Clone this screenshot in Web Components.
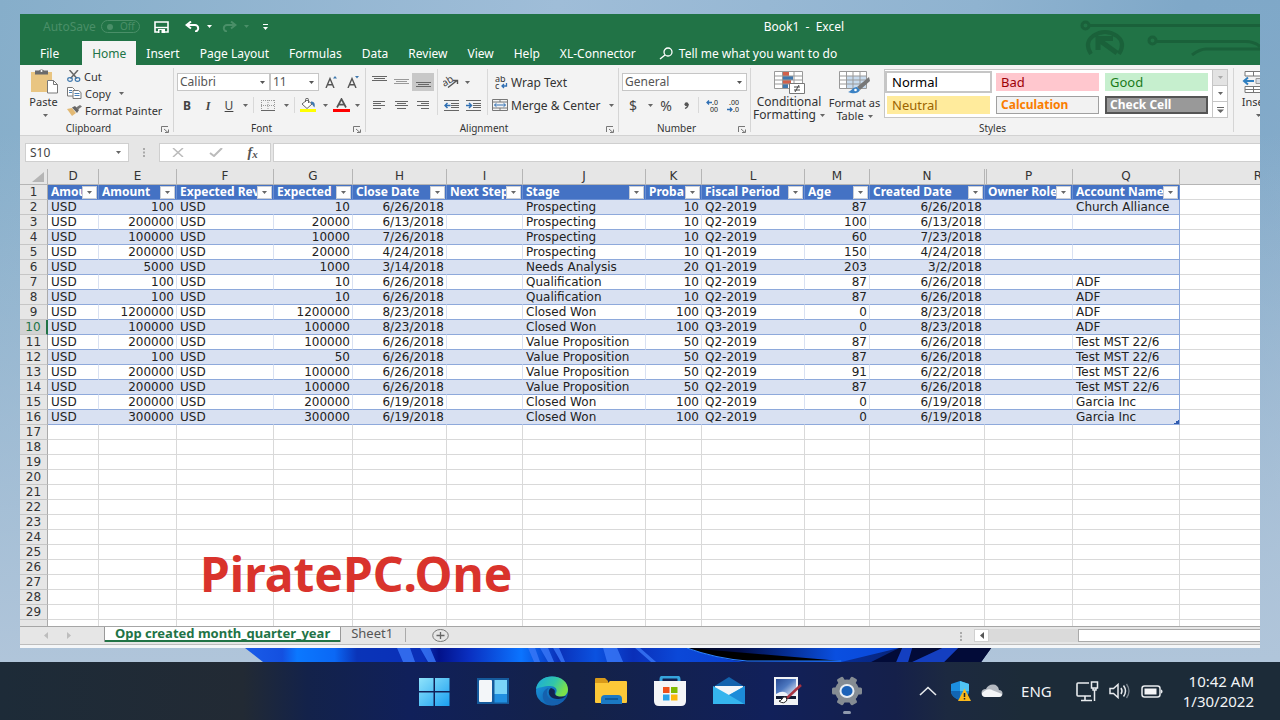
<!DOCTYPE html>
<html lang="en">
<head>
<meta charset="utf-8">
<title>Book1 - Excel</title>
<style>
    body {
        margin: 0;
        height: 100vh;
        overflow: hidden;
        display: flex;
        flex-direction: column;
        font-family: "Noto Sans", "Open Sans", sans-serif;
        font-size: 12px;
        color: #333;
    }
</style>
</head>
<body>
<desk-top>
    <excel-window>
        <title-bar></title-bar>
        <ribbon-tabs active="Home" tabs="File,Home,Insert,Page Layout,Formulas,Data,Review,View,Help,XL-Connector"></ribbon-tabs>
        <ribbon-bar></ribbon-bar>
        <formula-bar></formula-bar>
        <sheet-grid></sheet-grid>
        <sheet-tabs></sheet-tabs>
    </excel-window>
    <span slot="mark">PiratePC.One</span>
</desk-top>
<task-bar></task-bar>

<script>
const svg = (w, h, body) =>
    `<svg width="${w}" height="${h}" viewBox="0 0 ${w} ${h}" fill="none" aria-hidden="true">${body}</svg>`;

const lines = (rows, color = '#666') =>
    rows.map(([x, y, w]) => `<path d="M${x} ${y}.5h${w}" stroke="${color}"/>`).join('');

const ICONS = {
    caret: svg(5, 3, '<path d="M0 0h5L2.5 3z" fill="currentColor"/>'),
    more: svg(7, 6, '<path d="M0 .5h7" stroke="currentColor"/><path d="M0 2.500h7L3.500 6z" fill="currentColor"/>'),
    save: svg(15, 12, '<path d="M1 1h13v10H1z" stroke="#fff" stroke-width="1.6"/><path d="M1 6.5h13" stroke="#fff" stroke-width="1.4"/><path d="M4 8h7v4H4z" fill="#fff"/><path d="M5.500 9h2v3h-2z" fill="#217346"/>'),
    undo: svg(16, 11, '<path d="M2 4h8a3.200 3.200 0 0 1 0 6.400" stroke="currentColor" stroke-width="2"/><path d="M6 .5L1.500 4 6 7.500" stroke="currentColor" stroke-width="2"/>'),
    redo: svg(16, 11, '<path d="M14 4H6a3.200 3.200 0 0 0 0 6.400" stroke="currentColor" stroke-width="2"/><path d="M10 .5L14.500 4 10 7.500" stroke="currentColor" stroke-width="2"/>'),
    customize: svg(5, 6, '<path d="M0 .5h5" stroke="#fff"/><path d="M0 3h5L2.500 6z" fill="#fff"/>'),
    search: svg(15, 13, '<circle cx="9" cy="5" r="4" stroke="#fff" stroke-width="1.300"/><path d="M6 8l-5 4" stroke="#fff" stroke-width="1.500"/>'),
    paste: svg(28, 25, '<path d="M1 3h21v20H1z" fill="#e9c582"/><path d="M5 1.500h4a3 2 0 0 1 5 0h4v4H5z" fill="#6b6b6b"/><circle cx="11.500" cy="2" r="1" fill="#fff"/><path d="M17 11h7l4 4v9.500H17z" fill="#fff"/><path d="M17.500 11.500h6l4 4v8.500h-10z" stroke="#777"/><path d="M23.500 11.500v4h4" stroke="#777"/>'),
    cut: svg(14, 12, '<path d="M2.500 0L10 8.500M11 0L3.500 8.500" stroke="#666" stroke-width="1.500"/><ellipse cx="3" cy="9.500" rx="2.300" ry="1.800" stroke="#3f78ae" stroke-width="1.200"/><ellipse cx="10.500" cy="9.500" rx="2.300" ry="1.800" stroke="#3f78ae" stroke-width="1.200"/>'),
    copy: svg(15, 12, '<path d="M.5.5h5l2 2v6.500h-7z" fill="#fff" stroke="#777"/><path d="M2 3.500h3M2 5.500h3" stroke="#4a80b5"/><path d="M6 3.500h5.500l2.500 2v6H6z" fill="#fff" stroke="#777"/><path d="M7.500 6.500h5M7.500 8.500h5" stroke="#4a80b5"/>'),
    painter: svg(15, 11, '<path d="M0 4l5-1 4 5-4 3z" fill="#e2b974"/><path d="M5 2.500l3-1.500 4 4-2 3z" fill="#666"/><path d="M9 2.500l4-2.500 2 1.500-4 3z" fill="#777"/>'),
    grow: svg(13, 12, '<path d="M1 12L5 2.500 9 12M2.600 8.700h4.800" stroke="#555" stroke-width="1.400"/><path d="M8 2.500h4L10 0z" fill="#3f78ae"/>'),
    shrink: svg(13, 12, '<path d="M1 12L5 2.500 9 12M2.600 8.700h4.800" stroke="#555" stroke-width="1.400"/><path d="M8 0h4L10 2.500z" fill="#3f78ae"/>'),
    borders: svg(14, 11, '<path d="M.5 0v11M7 0v11M13.500 0v11M0 .5h14M0 5.500h14" stroke="#999" stroke-dasharray="1 1"/><path d="M0 10.500h14" stroke="#666"/>'),
    fill: svg(18, 14, '<path d="M3 6l5-4 5 4-5 4.500z" fill="#fff" stroke="#666"/><path d="M6.500 4V1.500a1.500 1.200 0 0 1 3 0V5" stroke="#666"/><path d="M12 3.500c3 0 4.500 2 3.500 6-1.500-1-1.500-3-3.500-4z" fill="#3f78ae"/><path d="M1 11h16v3H1z" fill="#ff0"/>'),
    color: svg(17, 14, '<path d="M4 9.500L8.500 1 13 9.500M5.500 6.700h6" stroke="#555" stroke-width="1.700"/><path d="M0 11h17v3H0z" fill="#f00"/>'),
    top: svg(15, 12, lines([[0, 0, 15], [2, 2, 11], [0, 4, 15]])),
    middle: svg(15, 12, lines([[0, 3, 15], [2, 5, 11], [0, 7, 15]], '#999')),
    bottom: svg(15, 12, lines([[0, 6, 15], [2, 8, 11], [0, 10, 15]])),
    left: svg(12, 10, lines([[0, 1, 12], [0, 3, 8], [0, 5, 12], [0, 8, 8]])),
    center: svg(13, 10, lines([[0, 1, 13], [2, 3, 9], [0, 5, 13], [2, 8, 9]])),
    right: svg(12, 10, lines([[0, 1, 12], [4, 3, 8], [0, 5, 12], [4, 8, 8]])),
    orient: svg(17, 12, '<text x="0" y="9" font-size="10" fill="#444" transform="rotate(-32 4 8)">ab</text><path d="M5 11.500l9-7M10 4.500h4.500v3.500" stroke="#555" stroke-width="1.400"/>'),
    outdent: svg(15, 11, lines([[0, 0, 15], [7, 3, 8], [7, 5, 8], [7, 7, 8], [0, 10, 15]]) + '<path d="M1 5.500h5.500M3.500 3L1 5.500 3.500 8" stroke="#2f6fb3" stroke-width="1.500"/>'),
    indent: svg(15, 11, lines([[0, 0, 15], [7, 3, 8], [7, 5, 8], [7, 7, 8], [0, 10, 15]]) + '<path d="M0 5.500h5.500M3 3l2.500 2.500L3 8" stroke="#2f6fb3" stroke-width="1.500"/>'),
    wrap: svg(14, 13, '<text x="1" y="6" font-size="9" fill="#333">ab</text><text x="1" y="13" font-size="9" fill="#333">c</text><path d="M12.500 7v3H8M10 8l-2 2 2 2" stroke="#2f6fb3" stroke-width="1.300"/>'),
    merge: svg(16, 12, '<path d="M.5.500h15v11H.5zM.5 3h15M.5 9h15M8 0v3M8 9v3" stroke="#777"/><path d="M2.500 6h11M4.500 4.200L2.500 6l2 1.800M11.500 4.200l2 1.800-2 1.800" stroke="#2f6fb3"/>'),
    comma: svg(5, 7, '<circle cx="2.500" cy="2.300" r="2" fill="#555"/><path d="M4 2q.5 3-3 4.500" stroke="#555" stroke-width="1.200"/>'),
    incDec: svg(13, 13, '<text x="6" y="6" font-size="7" fill="#222">.0</text><text x="4" y="13" font-size="7" fill="#222">00</text><path d="M1 3.500h5M3 1.500l-2 2 2 2" stroke="#2f6fb3" stroke-width="1.300"/>'),
    decDec: svg(13, 13, '<text x="2" y="6" font-size="7" fill="#222">.00</text><text x="6" y="13" font-size="7" fill="#222">.0</text><path d="M0 10.500h5M3 8.500l2 2-2 2" stroke="#2f6fb3" stroke-width="1.300"/>'),
    condFormat: svg(31, 23, '<path d="M.5.500h28v17H.5z" fill="#fff"/><path d="M9 1h6v4H9zM9 9h8v4H9z" fill="#d2604a"/><path d="M9 5h10v4H9zM9 13h5v4H9z" fill="#3f78ae"/><path d="M.5.500h28v17H.5zM.5 5h28M.5 9h28M.5 13h28M8.500 0v18M20 0v18" stroke="#999"/><path d="M15.500 12.500h15v10h-15z" fill="#fff" stroke="#777"/><path d="M20 16h6M20 19h6M25 14l-4 7" stroke="#444"/>'),
    formatTable: svg(31, 24, '<path d="M.5.500h27v17H.5z" fill="#fff"/><path d="M8 5h19v12H8z" fill="#c8dbee"/><path d="M.5.500h27v17H.5zM.5 5h27M.5 9h27M.5 13h27M7.500 0v18M14 0v18M21 0v18" stroke="#999"/><path d="M30 6l1 4-10 9-3-3z" fill="#777"/><path d="M9 21c4-1 4-5 9-5l3 3c-2 4-7 4-12 2z" fill="#3b82c4"/><circle cx="16.500" cy="19" r="1.300" fill="#fff"/>'),
    insertCells: svg(30, 23, '<path d="M3 .5h26v4.500H3zM3 15.500h26v6H3zM11.500 0v5M20 0v5M11.500 15.500v6M20 15.500v6M3 18.500h26" fill="#fff" stroke="#777"/><path d="M14 7.500h14v5H14z" fill="#d7dde5" stroke="#999"/><path d="M2 10h10M6 6.500L2 10l4 3.500" stroke="#2f7fc0" stroke-width="2"/>'),
    launcher: svg(8, 7, '<path d="M.5 6V.5H7" stroke="#777"/><path d="M3 3l4 3.500M7.500 3.500v3H4" stroke="#777"/>'),
    cancel: svg(12, 9, '<path d="M1 0l10 9M11 0L1 9" stroke="#bbb" stroke-width="1.500"/>'),
    accept: svg(14, 9, '<path d="M1 5l4 3L13 0" stroke="#bbb" stroke-width="2"/>'),
    dots: svg(3, 9, '<path d="M0 0h2v2H0zM0 3.500h2v2H0zM0 7h2v2H0z" fill="#aaa"/>'),
    prev: svg(4, 7, '<path d="M4 0v7L0 3.500z" fill="currentColor"/>'),
    next: svg(4, 7, '<path d="M0 0v7l4-3.500z" fill="currentColor"/>'),
    plus: svg(17, 13, '<ellipse cx="8.500" cy="6.500" rx="7.800" ry="6" stroke="#777"/><path d="M4.500 6.500h8M8.500 3v7" stroke="#666" stroke-width="1.300"/>'),
    start: svg(32, 30, '<defs><linearGradient id="s" x1="0" y1="0" x2="1" y2="1"><stop stop-color="#8fe3fb"/><stop offset="1" stop-color="#1a9ff0"/></linearGradient></defs><path d="M1 2h14.500v13H1zM17 2h14.500v13H17zM1 16.500h14.500V30H1zM17 16.500h14.500V30H17z" fill="url(#s)"/>'),
    widgets: svg(32, 28, '<path d="M0 1h32v26H0z" fill="#155a9c"/><rect x="2" y="3" width="13" height="22" rx="1" fill="#f3f6f9"/><rect x="17.500" y="3" width="12.500" height="14" fill="#7ad4f8"/><rect x="17.500" y="17" width="12.500" height="8.500" fill="#218fe0"/>'),
    edge: svg(34, 30, '<defs><linearGradient id="e" x1="0" y1="0" x2="1" y2=".4"><stop stop-color="#1ba8dd"/><stop offset=".6" stop-color="#32c6a9"/><stop offset="1" stop-color="#7be04a"/></linearGradient><linearGradient id="f" x1="0" y1="0" x2="1" y2="1"><stop stop-color="#1b9de2"/><stop offset="1" stop-color="#0c4ea0"/></linearGradient></defs><ellipse cx="17" cy="15" rx="16" ry="14.500" fill="url(#f)"/><path d="M1 13C2 5 9 .5 17 .5c10 0 16 6 16 13 0 5-4 7.500-8 7.500-5 0-5.500-2-4-4 2-4-1-7-6-7-6 0-12 2-14 3z" fill="url(#e)"/><path d="M14 12c-3 2-4 12 8 13 4 0 7-2 8-3-3 6-9 8-15 7C5 26 6 13 14 12z" fill="#1561ae"/><path d="M16 12c-4 2-3 11 6 11 5 0 7-1 9-3-4 1-10 1-11-2-1-2 2-4-4-6z" fill="#112250"/>'),
    explorer: svg(34, 28, '<path d="M1 2q0-1 1-1h9l3 3v6H1z" fill="#d89a1a"/><path d="M1 6h13l2-2h16q1 0 1 1v20q0 1-1 1H2q-1 0-1-1z" fill="#fcc838"/><path d="M7 27v-5q0-4 4-4h13q4 0 4 4v5z" fill="#1b79c4"/><path d="M11 22h13" stroke="#0c5a9c" stroke-width="2"/>'),
    store: svg(34, 30, '<path d="M8 7V3q0-2 2-2h14q2 0 2 2v4" stroke="#35a4dc" stroke-width="3"/><path d="M1 5h32v20q0 5-5 5H6q-5 0-5-5z" fill="#f4f5f7"/><path d="M10 11h6.500v6H10z" fill="#f1511b"/><path d="M18 11h6.500v6H18z" fill="#80bb03"/><path d="M10 18.500h6.500v6H10z" fill="#2aa3ea"/><path d="M18 18.500h6.500v6H18z" fill="#fbb80c"/>'),
    mail: svg(34, 28, '<path d="M1 10L17 0l16 10v3H1z" fill="#1262ad"/><path d="M3 9h28v10H3z" fill="#f2f5f8"/><path d="M1 9l16 9 16-9v18H1z" fill="#35b5ee"/><path d="M17 18l16 9.500V9z" fill="#1c8bd8"/>'),
    pen: svg(30, 28, '<defs><linearGradient id="p" x1="0" y1="0" x2="1" y2="1"><stop stop-color="#274a94"/><stop offset=".45" stop-color="#4d78c0"/><stop offset="1" stop-color="#fff"/></linearGradient></defs><path d="M1 0h24v28H1z" fill="#f1f3f6"/><path d="M3 2h20v17H3z" fill="url(#p)"/><path d="M3 17q8-5 12 1v2H3z" fill="#eef3fa"/><path d="M3 19h20v3H3z" fill="#101a33"/><path d="M28 8L14 21" stroke="#a83240" stroke-width="2.500"/><path d="M13 20q-3-1-4 2-1 2-3 2 5 4 8-1z" fill="#fff" stroke="#222"/>'),
    settings: svg(34, 30, `<g transform="translate(17 15)" fill="#858c93">${[0, 60, 120, 180, 240, 300].map(turn => `<rect x="-3.500" y="-15" width="7" height="10" rx="1.500" transform="rotate(${turn + 30})"/>`).join('')}<ellipse rx="12" ry="11.500"/><ellipse rx="7.500" ry="7" fill="#e9eef4"/><ellipse rx="5.500" ry="5" fill="#1c62b8"/></g>`),
    chevron: svg(18, 10, '<path d="M1 9l8-7.500L17 9" stroke="#e8ebee" stroke-width="1.600"/>'),
    shield: svg(21, 20, '<path d="M1 3l9-3 9 3v7c0 5-5 8-9 9-4-1-9-4-9-9z" fill="#1c8fe0"/><path d="M10 0l9 3v7h-9z" fill="#50c5f5"/><path d="M1 10h9v9c-4-1-9-4-9-9z" fill="#1265b2"/><path d="M14.500 7.500L21 20H8z" fill="#fbb91c"/><path d="M14.500 12v4M14.500 17v1.500" stroke="#222" stroke-width="1.500"/>'),
    cloud: svg(22, 14, '<path d="M5 13q-4.500 0-4.500-4T5 5q2-4.500 7-4.500T18 6q3.500 0 3.500 3.500T18 13z" fill="#b4b9c0"/><path d="M4 13q-3.500-1-3-4Q7 3 12 6.500L21 10q-.500 3-3 3z" fill="#f4f5f7"/>'),
    network: svg(23, 21, '<path d="M13 2H2q-1 0-1 1v11q0 1 1 1h13M9 15v4M5 19.500h11" stroke="#e8ebee" stroke-width="1.600"/><path d="M15.500 1h6v6h-6zM17 7v2h3V7M18.500 9v11" stroke="#e8ebee" stroke-width="1.500"/>'),
    volume: svg(22, 16, '<path d="M1 5.500h3.500L9 1.500v13l-4.500-4H1z" stroke="#e8ebee" stroke-width="1.500"/><path d="M12 5q2 3 0 6M14.500 2.500q4 5.500 0 11" stroke="#e8ebee" stroke-width="1.500"/><path d="M17.500 1q5 7 0 14" stroke="#77818b" stroke-width="1.300"/>'),
    battery: svg(22, 13, '<rect x="1" y="1" width="18" height="11" rx="2.500" stroke="#e8ebee" stroke-width="1.500"/><path d="M3.500 3.500h12v6h-12z" fill="#f4f5f7"/><path d="M20 4.500q1.500 0 1.500 2t-1.500 2z" fill="#e8ebee"/>'),
};

// Shared base: attaches the shadow root and draws the template into it
class BaseElement extends HTMLElement {

    constructor() {
        super();
        this.attachShadow({mode: 'open'});
    }

    connectedCallback() {
        this.render();
    }

    render() {
        this.shadowRoot.innerHTML = `
            <style>
                * { box-sizing: border-box; }
                svg { display: block; flex: none; }
                button, input, select { font: inherit; color: inherit; margin: 0; padding: 0; border: 0; border-radius: 0; background: none; }
            </style>
            ${this._template()}
        `;
    }
}

class DeskTop extends BaseElement {
    _template() {
        return `
            <style>
                :host {
                    flex: 1;
                    min-height: 0;
                    display: flex;
                    position: relative;
                    padding: 14px 20px;
                    box-sizing: border-box;
                    background: linear-gradient(100deg, #86aeca 0, #9fbdd8 40%, #8fb3d0 70%, #7fa8c8 85%, transparent), linear-gradient(#7fa8c8, #a3bcd4);
                }
                .shade {
                    position: absolute;
                    inset: 0;
                    background: linear-gradient(transparent 20%, #b0c5da);
                }
                .bloom {
                    position: absolute;
                    left: 19%;
                    bottom: 0;
                    width: 59%;
                    height: 14px;
                }
                .bloom svg { width: 100%; height: 100%; }
                ::slotted(excel-window) { flex: 1; min-width: 0; position: relative; }
                ::slotted(span) {
                    position: absolute;
                    left: 200px;
                    bottom: 56px;
                    font-size: 48px;
                    line-height: 64px;
                    font-weight: 700;
                    color: #d9332c;
                }
            </style>
            <div class="shade"></div>
            <div class="bloom">
                <svg viewBox="0 0 755 14" preserveAspectRatio="none">
                    <defs>
                        <linearGradient id="petals">
                            <stop stop-color="#1a5ce8"/><stop offset=".05" stop-color="#1450e0"/><stop offset=".07" stop-color="#0b78ff"/>
                            <stop offset=".12" stop-color="#0b68f5"/><stop offset=".15" stop-color="#0a34b8"/><stop offset=".24" stop-color="#0a2fb8"/>
                            <stop offset=".26" stop-color="#02128a"/><stop offset=".3" stop-color="#0a2fc0"/><stop offset=".37" stop-color="#0b74ff"/>
                            <stop offset=".42" stop-color="#0a30b8"/><stop offset=".47" stop-color="#0b52e0"/><stop offset=".52" stop-color="#0a2fb8"/>
                            <stop offset=".58" stop-color="#0b48d8"/><stop offset=".66" stop-color="#0a40d0"/><stop offset="1" stop-color="#041448"/>
                        </linearGradient>
                        <linearGradient id="lens">
                            <stop stop-color="#01061c"/><stop offset=".25" stop-color="#020e48"/><stop offset=".7" stop-color="#0a4fe0"/><stop offset="1" stop-color="#0a48d8"/>
                        </linearGradient>
                    </defs>
                    <path d="M2 0h746l-10 14H20z" fill="url(#petals)"/>
                    <path d="M154 0l6 14h12l-5-14zM177 0l8 14h8l-6-14zM285 0l6 14h6l-5-14zM297 0l8 14h6l-6-14zM310 0l8 14h4l-6-14zM360 0l4 14h16l-6-14zM392 0l16 14h5L397 0z" fill="#3a78f8" opacity=".8"/>
                    <path d="M444 0h212l-58 14h-96C480 11 460 6 444 0z" fill="url(#lens)"/>
                    <path d="M444 0c16 6 36 11 60 13h94" stroke="#2a80ff"/>
                    <path d="M656 0h92l-10 14h-110z" fill="#020b38"/>
                    <path d="M659 0h10l-4 14h-12zM715 0h-16l-30 14h32z" fill="#143fc0"/>
                </svg>
            </div>
            <slot></slot>
            <slot name="mark"></slot>
        `;
    }
}

class ExcelWindow extends BaseElement {
    _template() {
        return `
            <style>
                :host { display: flex; flex-direction: column; overflow: hidden; background: #e6e6e6; }
            </style>
            <slot></slot>
        `;
    }
}

class TitleBar extends BaseElement {
    _template() {
        return `
            <style>
                :host {
                    display: flex;
                    align-items: center;
                    height: 27px;
                    padding: 0 0 2px 23px;
                    box-sizing: border-box;
                    background: #217346;
                    color: #fff;
                    position: relative;
                    z-index: 1;
                    flex: none;
                }
                button { display: flex; align-items: center; gap: 6px; }
                .auto { color: #4a8f68; gap: 5px; margin-right: 14px; }
                .toggle { display: flex; align-items: center; gap: 7px; width: 39px; height: 13px; padding-left: 5px; border: 1px solid #4a8f68; border-radius: 7px; font-size: 10px; line-height: 11px; }
                .toggle i { width: 6px; height: 6px; border-radius: 3px; background: #4a8f68; }
                .undo { margin-left: 16px; }
                .redo { margin: 0 14px 0 9px; color: #4a8f68; gap: 7px; }
                h1 { flex: 1; margin: 0; padding-left: 80px; font-size: 12px; font-weight: 400; text-align: center; white-space: pre; }
                .art { position: absolute; top: 0; right: 0; }
            </style>
            <button class="auto" role="switch" aria-checked="false">AutoSave <span class="toggle"><i></i>Off</span></button>
            <button aria-label="Save">${ICONS.save}</button>
            <button class="undo" aria-label="Undo">${ICONS.undo}${ICONS.caret}</button>
            <button class="redo" aria-label="Redo">${ICONS.redo}${ICONS.caret}</button>
            <button aria-label="Customize Quick Access Toolbar">${ICONS.customize}</button>
            <h1>Book1  -  Excel</h1>
            <div class="art">
                ${svg(180, 42, '<g stroke="#1a613a" stroke-width="3"><circle cx="5.500" cy="11.500" r="3.500"/><path d="M9 11.500h171"/><circle cx="72.500" cy="26.500" r="3.500"/><path d="M76 27.500h90q8 0 14 5M112 41q8-6 14-6h54"/><path d="M11 40q-7-11 2-18 12-8 24 0 9 7 2 18" stroke-width="4"/><path d="M37 39L19 26M18 36V24.500h15" stroke-width="5"/></g>')}
            </div>
        `;
    }
}

class RibbonTabs extends BaseElement {
    _template() {
        const active = this.getAttribute('active');
        return `
            <style>
                :host { display: flex; height: 24px; background: #217346; color: #fff; flex: none; }
                nav { display: flex; }
                a { display: flex; align-items: center; padding: 0 10px; color: inherit; text-decoration: none; }
                a:first-child { padding: 0 23px 0 20px; }
                a[aria-current] { background: #f3f3f3; color: #217346; }
                button { display: flex; align-items: center; gap: 5px; margin-left: 13px; }
            </style>
            <nav>
                ${this.getAttribute('tabs').split(',').map(tab =>
                    `<a href="#"${tab === active ? ' aria-current="page"' : ''}>${tab}</a>`).join('')}
            </nav>
            <button>${ICONS.search}Tell me what you want to do</button>
        `;
    }
}

class RibbonGroup extends BaseElement {
    _template() {
        return `
            <style>
                :host { display: flex; flex-direction: column; position: relative; flex: none; box-sizing: border-box; }
                :host::after { content: ""; position: absolute; right: 0; top: 3px; bottom: 3px; border-right: 1px solid #d5d5d5; }
                .content { height: 57px; display: flex; }
                footer { height: 13px; line-height: 13px; font-size: 10px; text-align: center; position: relative; }
                :host([launcher]) footer { padding-right: 17px; }
                button { position: absolute; right: 5px; top: 4px; }
            </style>
            <div class="content"><slot></slot></div>
            <footer>${this.getAttribute('label')}${this.hasAttribute('launcher') ? `<button aria-label="${this.getAttribute('label')} settings">${ICONS.launcher}</button>` : ''}</footer>
        `;
    }
}

class ToolButton extends BaseElement {
    _template() {
        const icon = this.getAttribute('icon');
        const caret = this.hasAttribute('caret') ? `<span class="caret">${ICONS.caret}</span>` : '';
        return `
            <style>
                :host { display: flex; flex: none; }
                button { flex: 1; display: flex; align-items: center; justify-content: center; white-space: nowrap; }
                .caret { color: #666; margin-left: 5px; }
                :host(.w10) .caret { margin-left: 0; }
                :host([text]) button { justify-content: flex-start; gap: 3px; }
                :host([big]) button { flex-direction: column; justify-content: flex-start; line-height: 13px; }
                :host([big]) svg { margin-bottom: 1px; }
                :host([big]) .caret { display: inline-block; vertical-align: middle; margin-left: 4px; }
                :host([pressed]) button { background: #c8c8c8; height: 18px; align-self: center; }
            </style>
            <button aria-label="${this.getAttribute('name')}">${icon ? ICONS[icon] : ''}<span><slot></slot>${this.hasAttribute('big') ? caret : ''}</span>${this.hasAttribute('big') ? '' : caret}</button>
        `;
    }
}

class ComboBox extends BaseElement {
    _template() {
        return `
            <style>
                :host { display: block; position: relative; height: 18px; box-sizing: border-box; border: 1px solid #c6c6c6; background: #fff; color: #555; }
                select { appearance: none; width: 100%; height: 16px; padding-left: 2px; line-height: 16px; display: block; }
                svg { position: absolute; right: 4px; top: 7px; pointer-events: none; }
            </style>
            <select aria-label="${this.getAttribute('name')}"><option>${this.getAttribute('value')}</option></select>
            ${ICONS.caret}
        `;
    }
}

class RibbonBar extends BaseElement {
    _template() {
        return `
            <style>
                :host { display: flex; height: 71px; background: #f3f3f3; border-bottom: 1px solid #d2d2d2; box-sizing: border-box; flex: none; overflow: hidden; }
                .col { display: flex; flex-direction: column; }
                .row { display: flex; align-items: stretch; height: 22px; margin-bottom: 1px; }
                .row > combo-box { align-self: center; flex: none; }
                .two { padding-top: 6px; }
                .sep { border-left: 1px solid #d9d9d9; margin: 3px 2px; }
                .block { padding-right: 3px; border-right: 1px solid #d9d9d9; height: 46px; margin-top: 4px; padding-top: 2px; }
                .clip { padding-top: 2px; font-size: 11px; }
                .clip tool-button { height: 18px; margin-bottom: -1px; }
                b, i, u, span { font-size: 12px; color: #444; }
                .w10 { width: 12px; } .w20 { width: 20px; } .w22 { width: 22px; } .w24 { width: 24px; }
                .gallery { display: flex; align-self: flex-start; margin-top: 4px; margin-left: 2px; border: 1px solid #c6c6c6; background: #fff; }
                .styles { display: grid; grid-template-columns: repeat(3, 103px); grid-auto-rows: 18px; gap: 5px 6px; padding: 3px 4px 3px 2px; }
                .styles button { text-align: left; padding-left: 5px; font-size: 13px; line-height: 16px; }
                .normal { color: #000; outline: 2px solid #c6c6c6; background: #fff; }
                .bad { background: #ffc7ce; color: #9c0006; }
                .good { background: #c6efce; color: #1a7b1a; }
                .neutral { background: #ffeb9c; color: #9c6500; }
                .styles .calc { background: #f2f2f2; border: 1px solid #a0a0a0; color: #fa7d00; font-weight: 700; padding-left: 4px; font-size: 12px; }
                .styles .check { background: #999; border: 2px solid #555; color: #fff; font-weight: 700; padding-left: 3px; font-size: 12px; line-height: 14px; }
                .scroll { display: flex; flex-direction: column; width: 15px; border-left: 1px solid #c6c6c6; color: #666; }
                .scroll button { flex: 1; display: flex; align-items: center; justify-content: center; }
                .scroll button + button { border-top: 1px solid #c6c6c6; }
                .scroll button:first-child { background: #e3e3e3; color: #aaa; }
            </style>
            <ribbon-group label="Clipboard" launcher style="width: 154px">
                <tool-button big caret icon="paste" name="Paste" style="width: 47px; padding-top: 4px; font-size: 11px">Paste<br></tool-button>
                <div class="col clip">
                    <tool-button text icon="cut" name="Cut">Cut</tool-button>
                    <tool-button text caret icon="copy" name="Copy">Copy</tool-button>
                    <tool-button text icon="painter" name="Format Painter">Format Painter</tool-button>
                </div>
            </ribbon-group>
            <ribbon-group label="Font" launcher style="width: 192px">
                <div class="col two" style="padding-left: 3px">
                    <div class="row">
                        <combo-box name="Font" value="Calibri" style="width: 93px"></combo-box>
                        <combo-box name="Font size" value="11" style="width: 49px"></combo-box>
                        <tool-button class="w24" icon="grow" name="Increase font size"></tool-button>
                        <tool-button class="w20" icon="shrink" name="Decrease font size"></tool-button>
                    </div>
                    <div class="row">
                        <tool-button class="w20" name="Bold"><b>B</b></tool-button>
                        <tool-button class="w22" name="Italic"><i style="font-family: 'Liberation Serif', serif; font-weight: 700">I</i></tool-button>
                        <tool-button class="w20" name="Underline"><u>U</u></tool-button>
                        <tool-button class="w10" caret name="Underline styles"></tool-button>
                        <div class="sep"></div>
                        <tool-button class="w24" icon="borders" name="Borders"></tool-button>
                        <tool-button class="w10" caret name="Border styles"></tool-button>
                        <div class="sep"></div>
                        <tool-button class="w22" icon="fill" name="Fill color"></tool-button>
                        <tool-button class="w10" caret name="Fill colors"></tool-button>
                        <tool-button class="w20" icon="color" name="Font color"></tool-button>
                        <tool-button class="w10" caret name="Font colors"></tool-button>
                    </div>
                </div>
            </ribbon-group>
            <ribbon-group label="Alignment" launcher style="width: 253px">
                <div class="block" style="padding-left: 2px">
                    <div class="row">
                        <tool-button class="w22" icon="top" name="Top align"></tool-button>
                        <tool-button class="w22" icon="middle" name="Middle align"></tool-button>
                        <tool-button class="w22" pressed icon="bottom" name="Bottom align"></tool-button>
                    </div>
                    <div class="row">
                        <tool-button class="w22" icon="left" name="Align left"></tool-button>
                        <tool-button class="w22" icon="center" name="Center"></tool-button>
                        <tool-button class="w22" icon="right" name="Align right"></tool-button>
                    </div>
                </div>
                <div class="block" style="padding-left: 2px">
                    <div class="row">
                        <tool-button caret icon="orient" name="Orientation" style="padding-left: 3px"></tool-button>
                    </div>
                    <div class="row">
                        <tool-button class="w22" icon="outdent" name="Decrease indent"></tool-button>
                        <tool-button class="w22" icon="indent" name="Increase indent"></tool-button>
                    </div>
                </div>
                <div class="col two" style="padding-left: 4px">
                    <div class="row">
                        <tool-button text icon="wrap" name="Wrap Text" style="padding-left: 2px">Wrap Text</tool-button>
                    </div>
                    <div class="row">
                        <tool-button text caret icon="merge" name="Merge &amp; Center">Merge &amp; Center</tool-button>
                    </div>
                </div>
            </ribbon-group>
            <ribbon-group label="Number" launcher style="width: 132px">
                <div class="col two" style="padding-left: 3px">
                    <div class="row">
                        <combo-box name="Number format" value="General" style="width: 125px"></combo-box>
                    </div>
                    <div class="row">
                        <tool-button class="w22" name="Accounting format"><span style="font-size: 14px">$</span></tool-button>
                        <tool-button class="w10" caret name="Currencies"></tool-button>
                        <tool-button class="w20" name="Percent style"><span style="font-size: 14px">%</span></tool-button>
                        <tool-button class="w20" icon="comma" name="Comma style"></tool-button>
                        <div class="sep"></div>
                        <tool-button class="w22" icon="incDec" name="Increase decimal"></tool-button>
                        <tool-button class="w20" icon="decDec" name="Decrease decimal"></tool-button>
                    </div>
                </div>
            </ribbon-group>
            <ribbon-group label="Styles" style="width: 483px">
                <tool-button big caret icon="condFormat" name="Conditional Formatting" style="width: 76px; padding-top: 6px">Conditional<br>Formatting</tool-button>
                <tool-button big caret icon="formatTable" name="Format as Table" style="width: 55px; padding-top: 6px; font-size: 11px">Format as<br>Table</tool-button>
                <div class="gallery">
                    <div class="styles">
                        <button class="normal">Normal</button>
                        <button class="bad">Bad</button>
                        <button class="good">Good</button>
                        <button class="neutral">Neutral</button>
                        <button class="calc">Calculation</button>
                        <button class="check">Check Cell</button>
                    </div>
                    <div class="scroll">
                        <button aria-label="Previous styles">${ICONS.caret}</button>
                        <button aria-label="Next styles">${ICONS.caret}</button>
                        <button aria-label="More styles">${ICONS.more}</button>
                    </div>
                </div>
            </ribbon-group>
            <ribbon-group label="">
                <tool-button big caret icon="insertCells" name="Insert" style="width: 46px; padding-top: 6px; font-size: 11px">Insert<br></tool-button>
            </ribbon-group>
        `;
    }
}

class FormulaBar extends BaseElement {
    _template() {
        return `
            <style>
                :host { display: flex; height: 33px; padding: 7px 0 7px 5px; box-sizing: border-box; flex: none; }
                .box { display: flex; align-items: center; height: 19px; background: #fff; border: 1px solid #cfcfcf; }
                .name { width: 104px; padding-right: 7px; color: #666; }
                .name input { flex: 1; min-width: 0; padding-left: 4px; color: #444; }
                .dots { width: 30px; display: flex; align-items: center; justify-content: center; }
                .actions { width: 112px; justify-content: space-around; margin-right: 2px; }
                .actions em { font: italic 700 14px "Liberation Serif", serif; color: #555; }
                .actions sub { font-size: 11px; vertical-align: -1px; }
                .formula { flex: 1; border-right: 0; }
                .formula input { width: 100%; }
            </style>
            <div class="box name"><input aria-label="Name box" value="S10">${ICONS.caret}</div>
            <div class="dots">${ICONS.dots}</div>
            <div class="box actions">
                <button aria-label="Cancel">${ICONS.cancel}</button>
                <button aria-label="Enter">${ICONS.accept}</button>
                <button aria-label="Insert function"><em>f<sub>x</sub></em></button>
            </div>
            <div class="box formula"><input aria-label="Formula bar"></div>
        `;
    }
}

class SheetGrid extends BaseElement {

    _columns = [
        ['D', 51, 'Amou'], ['E', 78, 'Amount'], ['F', 97, 'Expected Rev'], ['G', 79, 'Expected'],
        ['H', 94, 'Close Date'], ['I', 76, 'Next Step'], ['J', 123, 'Stage'], ['K', 56, 'Proba'],
        ['L', 103, 'Fiscal Period'], ['M', 65, 'Age'], ['N', 115, 'Created Date'], ['P', 88, 'Owner Role'],
        ['Q', 107, 'Account Name'], ['R', 157, ''],
    ];

    // amount, expected, close date, stage, probability, period, age, created, account
    _records = [
        [100, 10, '6/26/2018', 'Prospecting', 10, 'Q2-2019', 87, '6/26/2018', 'Church Alliance'],
        [200000, 20000, '6/13/2018', 'Prospecting', 10, 'Q2-2019', 100, '6/13/2018', ''],
        [100000, 10000, '7/26/2018', 'Prospecting', 10, 'Q2-2019', 60, '7/23/2018', ''],
        [200000, 20000, '4/24/2018', 'Prospecting', 10, 'Q1-2019', 150, '4/24/2018', ''],
        [5000, 1000, '3/14/2018', 'Needs Analysis', 20, 'Q1-2019', 203, '3/2/2018', ''],
        [100, 10, '6/26/2018', 'Qualification', 10, 'Q2-2019', 87, '6/26/2018', 'ADF'],
        [100, 10, '6/26/2018', 'Qualification', 10, 'Q2-2019', 87, '6/26/2018', 'ADF'],
        [1200000, 1200000, '8/23/2018', 'Closed Won', 100, 'Q3-2019', 0, '8/23/2018', 'ADF'],
        [100000, 100000, '8/23/2018', 'Closed Won', 100, 'Q3-2019', 0, '8/23/2018', 'ADF'],
        [200000, 100000, '6/26/2018', 'Value Proposition', 50, 'Q2-2019', 87, '6/26/2018', 'Test MST 22/6'],
        [100, 50, '6/26/2018', 'Value Proposition', 50, 'Q2-2019', 87, '6/26/2018', 'Test MST 22/6'],
        [200000, 100000, '6/26/2018', 'Value Proposition', 50, 'Q2-2019', 91, '6/22/2018', 'Test MST 22/6'],
        [200000, 100000, '6/26/2018', 'Value Proposition', 50, 'Q2-2019', 87, '6/26/2018', 'Test MST 22/6'],
        [200000, 200000, '6/19/2018', 'Closed Won', 100, 'Q2-2019', 0, '6/19/2018', 'Garcia Inc'],
        [300000, 300000, '6/19/2018', 'Closed Won', 100, 'Q2-2019', 0, '6/19/2018', 'Garcia Inc'],
    ];

    _dataRow([amount, expected, close, stage, probability, period, age, created, account], index) {
        const cells = ['USD', amount, 'USD', expected, close, '', stage, probability, period, age, created, '', account, ''];
        const isRight = value => typeof value === 'number' || /^\d+\//.test(value);
        return `
            <tr class="data">
                <th scope="row"${index === 8 ? ' class="current"' : ''}>${index + 2}</th>
                ${cells.map(value => `<td${isRight(value) ? ' class="num"' : ''}>${value}</td>`).join('')}
            </tr>`;
    }

    _emptyRow(number) {
        return `<tr><th scope="row">${number}</th>${'<td></td>'.repeat(this._columns.length)}</tr>`;
    }

    _template() {
        return `
            <style>
                :host { display: block; flex: 1 1 0; min-height: 0; overflow: hidden; background: #fff; font-family: "DejaVu Sans", sans-serif; }
                table { width: 1317px; table-layout: fixed; border-collapse: separate; border-spacing: 0; font-size: 12px; color: #222; }
                th, td { height: 15px; padding: 0 3px; line-height: 14px; white-space: nowrap; border: 0 solid #d9d9d9; border-width: 0 1px 1px 0; text-align: left; }
                thead th { height: 16px; line-height: 15px; font-weight: 400; color: #333; text-align: center; background: #e6e6e6; border-color: #b5b5b5; }
                thead .hidden-before { box-shadow: inset 1px 0 #e6e6e6, inset 2px 0 #b5b5b5; }
                thead svg { margin-left: auto; }
                tbody th[scope=row] { font-weight: 400; text-align: center; color: #333; background: #e6e6e6; border-color: #c6c6c6; border-right-color: #aaa; }
                tbody th.current[scope=row] { background: #d2d2d2; color: #217346; border-right: 2px solid #217346; }
                .names td, .names th:not([scope=row]) { padding: 0; }
                .names th:not([scope=row]) { background: #4472c4; color: #fff; font-family: "Noto Sans", sans-serif; font-weight: 700; border-color: #6a8fd2; }
                .names div { display: flex; height: 14px; align-items: center; padding-left: 3px; }
                .names span { flex: 1; min-width: 0; overflow-x: clip; }
                .names button { flex: none; width: 15px; height: 13px; margin-right: 1px; background: #fdfdfd; border: 1px solid #c8cdd6; color: #666; display: flex; align-items: center; justify-content: center; }
                .data td:not(:last-child) { border-color: #d9e1f2; border-bottom-color: #8ea9db; }
                .data td:nth-last-child(2) { border-right-color: #8ea9db; }
                .data:nth-child(even) td:not(:last-child) { background: #d9e1f2; }
                .data .num { text-align: right; padding-right: 2px; }
                .data:nth-child(16) td:nth-last-child(2) { background: linear-gradient(135deg, transparent 50%, #2f5bb0 50%) right bottom / 5px 5px no-repeat #d9e1f2; }
            </style>
            <table>
                <colgroup><col style="width: 28px">${this._columns.map(([, width]) => `<col style="width: ${width}px">`).join('')}</colgroup>
                <thead>
                    <tr>
                        <th>${svg(12, 10, '<path d="M12 0v10H0z" fill="#b5b5b5"/>')}</th>
                        ${this._columns.map(([letter]) => `<th scope="col"${letter === 'P' ? ' class="hidden-before"' : ''}>${letter}</th>`).join('')}
                    </tr>
                </thead>
                <tbody>
                    <tr class="names">
                        <th scope="row">1</th>
                        ${this._columns.map(([, , name]) => name
                            ? `<th><div><span>${name}</span><button aria-label="Filter ${name}">${ICONS.caret}</button></div></th>`
                            : '<td></td>').join('')}
                    </tr>
                    ${this._records.map((record, index) => this._dataRow(record, index)).join('')}
                    ${Array.from({length: 13}, (_, index) => this._emptyRow(index + 17)).join('')}
                    ${this._emptyRow('')}
                </tbody>
            </table>
        `;
    }
}

class SheetTabs extends BaseElement {
    _template() {
        return `
            <style>
                :host { display: flex; flex: none; height: 22px; box-sizing: border-box; border-top: 1px solid #a6a6a6; border-bottom: 3px solid #f4f6f8; box-shadow: inset 0 -1px #bdbdbd; align-items: flex-start; font-size: 13px; color: #555; }
                .nav { display: flex; justify-content: space-between; width: 27px; margin: 5px 33px 0 24px; color: #bdbdbd; }
                a { height: 15px; line-height: 12px; padding: 0 10px; color: inherit; text-decoration: none; }
                a[aria-current] { background: #fff; color: #217346; font-weight: 700; border: 1px solid #999; border-width: 0 1px; box-shadow: inset 0 -2px #217346; }
                .line { width: 1px; height: 14px; background: #aaa; margin: 1px 26px 0 2px; }
                .add { margin-top: 2px; }
                .dots { margin: 5px 11px 0 auto; }
                .bar { display: flex; width: 286px; height: 13px; margin-top: 2px; background: #dadada; color: #555; }
                .bar button { width: 15px; background: #fff; border: 1px solid #d0d0d0; display: flex; align-items: center; justify-content: center; }
                .thumb { flex: 1; margin-left: 89px; background: #fff; border: 1px solid #aaa; border-right: 0; }
            </style>
            <div class="nav"><button aria-label="Previous sheet">${ICONS.prev}</button><button aria-label="Next sheet">${ICONS.next}</button></div>
            <a href="#" aria-current="page">Opp created month_quarter_year</a>
            <a href="#">Sheet1</a>
            <div class="line"></div>
            <button class="add" aria-label="New sheet">${ICONS.plus}</button>
            <div class="dots">${ICONS.dots}</div>
            <div class="bar"><button aria-label="Scroll left">${ICONS.prev}</button><div class="thumb"></div></div>
        `;
    }
}

class TaskBar extends BaseElement {
    _apps = ['start', 'widgets', 'edge', 'explorer', 'store', 'mail', 'pen', 'settings'];

    _template() {
        return `
            <style>
                :host {
                    display: grid;
                    grid-template-columns: 1fr auto 1fr;
                    align-items: center;
                    height: 58px;
                    flex: none;
                    padding-right: 26px;
                    box-sizing: border-box;
                    color: #f2f4f6;
                    font-size: 15px;
                    line-height: 20px;
                    background: linear-gradient(90deg, #1d2b38 0, #222a34 19%, #13224a 24%, #10205a 32%, #142248 45%, #11205a 60%, #15204a 70%, #1c2940 74%, #1c2b38 80%);
                }
                .apps { grid-column: 2; display: flex; padding-left: 26px; }
                .apps button { width: 59px; height: 58px; display: flex; align-items: center; justify-content: center; position: relative; }
                .apps .open::after { content: ""; position: absolute; bottom: 6px; width: 8px; height: 3px; border-radius: 2px; background: #8f99ad; }
                .tray { display: flex; align-items: center; justify-content: flex-end; }
                .tray button { margin-right: 10px; }
                .tray .lang { margin: 0 24px 0 8px; }
                .tray .battery { margin: 0 20px 0 0; }
                .clock { text-align: right; white-space: pre; }
            </style>
            <div class="apps">
                ${this._apps.map(app => `<button aria-label="${app}"${app === 'settings' ? ' class="open"' : ''}>${ICONS[app]}</button>`).join('')}
            </div>
            <div class="tray">
                <button aria-label="Show hidden icons" style="margin-right: 13px">${ICONS.chevron}</button>
                <button aria-label="Windows Security">${ICONS.shield}</button>
                <button aria-label="OneDrive">${ICONS.cloud}</button>
                <button class="lang">ENG</button>
                <button aria-label="Network">${ICONS.network}</button>
                <button aria-label="Volume">${ICONS.volume}</button>
                <button class="battery" aria-label="Battery">${ICONS.battery}</button>
                <time class="clock" datetime="2022-01-30T10:42">10:42 AM<br>1/30/2022</time>
            </div>
        `;
    }
}

customElements.define('desk-top', DeskTop);
customElements.define('excel-window', ExcelWindow);
customElements.define('title-bar', TitleBar);
customElements.define('ribbon-tabs', RibbonTabs);
customElements.define('ribbon-group', RibbonGroup);
customElements.define('tool-button', ToolButton);
customElements.define('combo-box', ComboBox);
customElements.define('ribbon-bar', RibbonBar);
customElements.define('formula-bar', FormulaBar);
customElements.define('sheet-grid', SheetGrid);
customElements.define('sheet-tabs', SheetTabs);
customElements.define('task-bar', TaskBar);
</script>
</body>
</html>
